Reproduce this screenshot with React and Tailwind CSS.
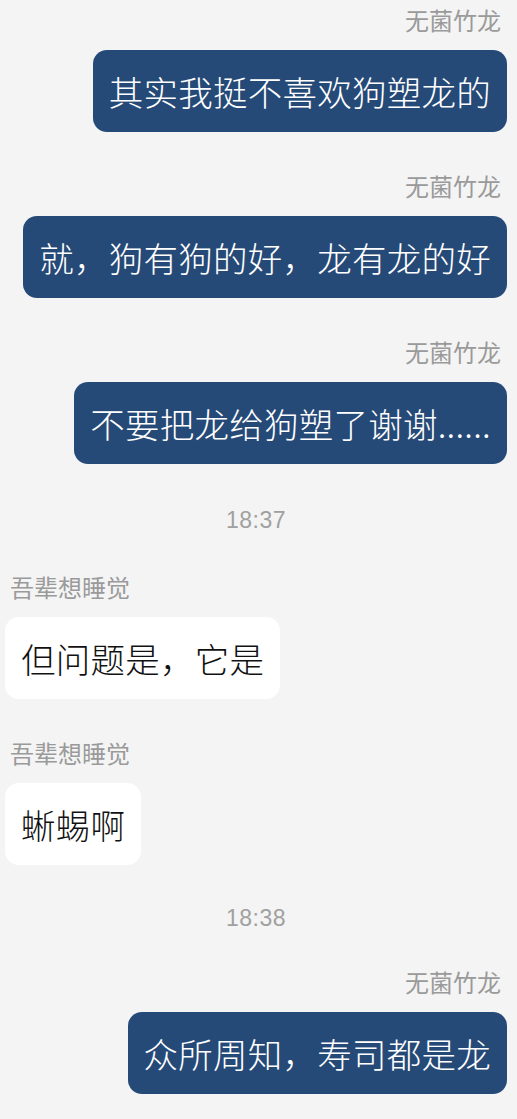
import React from "react";

// --- CHAT DATA ---
const ITEMS = [
  { type: "msg", side: "right", name: "无菌竹龙", text: "其实我挺不喜欢狗塑龙的" },
  { type: "msg", side: "right", name: "无菌竹龙", text: "就，狗有狗的好，龙有龙的好" },
  { type: "msg", side: "right", name: "无菌竹龙", text: "不要把龙给狗塑了谢谢......" },
  { type: "time", text: "18:37", first: true },
  { type: "msg", side: "left", name: "吾辈想睡觉", text: "但问题是，它是" },
  { type: "msg", side: "left", name: "吾辈想睡觉", text: "蜥蜴啊" },
  { type: "time", text: "18:38" },
  { type: "msg", side: "right", name: "无菌竹龙", text: "众所周知，寿司都是龙" },
];

const FONT = "font-['Noto_Sans_CJK_SC','Noto_Sans',sans-serif]";

function Message({ side, name, text }) {
  const mine = side === "right";
  return (
    <div className={`flex flex-col mb-[38px] ${mine ? "items-end" : "items-start"}`}>
      <div className={`text-[24px] leading-[32px] text-[#9a9a9a] mb-[14px] ${mine ? "pr-[6px]" : "pl-[5px]"}`}>
        {name}
      </div>
      <div
        className={`rounded-[14px] px-[16px] py-[17px] text-[34.5px] leading-[48px] tracking-[0.25px] font-light ${
          mine ? "bg-[#264a78] text-white" : "bg-white text-[#111]"
        }`}
      >
        {text}
      </div>
    </div>
  );
}

function Stamp({ text, first }) {
  return (
    <div
      className={`text-center text-[23px] leading-[28px] tracking-[0.5px] text-[#a0a0a0] font-['Liberation_Sans',sans-serif] ${
        first ? "mt-[4px] mb-[37px]" : "mt-[1px] mb-[34px]"
      }`}
    >
      {text}
    </div>
  );
}

export default function App() {
  return (
    <div className={`flex flex-col min-h-[1119px] w-[517px] bg-[#f4f4f4] pt-[4px] pl-[5px] pr-[10px] ${FONT}`}>
      {ITEMS.map((it, i) =>
        it.type === "time" ? <Stamp key={i} {...it} /> : <Message key={i} {...it} />
      )}
    </div>
  );
}
